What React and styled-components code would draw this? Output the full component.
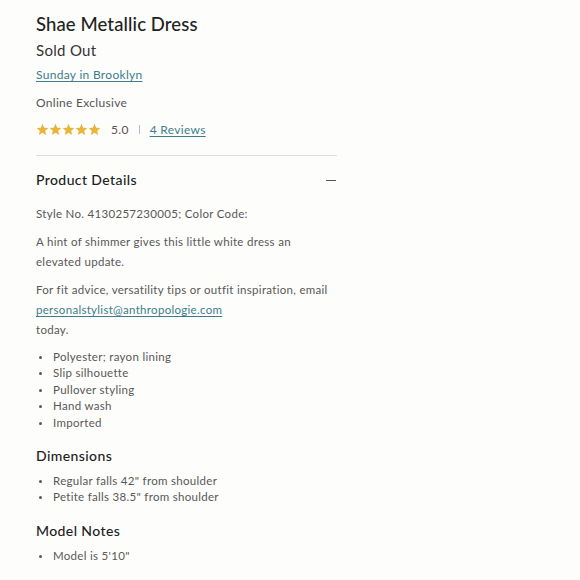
import React from "react";
import styled, { createGlobalStyle } from "styled-components";

const GlobalStyle = createGlobalStyle`
    html, body {
        margin: 0;
        padding: 0;
        background: #fdfdfb;
    }
    body {
        font-family: "Lato", "Open Sans", sans-serif;
        color: #555;
    }
`;

const Page = styled.div`
    width: 301px;
    padding: 11px 0 0 36px;
    display: flex;
    flex-direction: column;
`;

const Title = styled.h1`
    margin: 0;
    font-size: 18.5px;
    font-weight: 500;
    line-height: 26px;
    letter-spacing: 0.1px;
    color: #222;
`;

const Status = styled.div`
    margin-top: 4px;
    font-size: 15px;
    line-height: 18px;
    letter-spacing: 0.3px;
    color: #333;
`;

const Link = styled.a`
    color: #3b7d8c;
    text-decoration: underline;
    text-underline-offset: 2px;
    letter-spacing: 0.3px;
    font-size: ${(p) => p.size || "12px"};
`;

const Brand = styled.div`
    margin-top: 8px;
    font-size: 12px;
    line-height: 16px;
`;

const Note = styled.div`
    margin-top: 12px;
    font-size: 12px;
    line-height: 16px;
    letter-spacing: 0.3px;
    color: #555;
`;

const Rating = styled.div`
    margin-top: 10px;
    display: flex;
    align-items: center;
    height: 16px;
    font-size: 12px;
    letter-spacing: 0.3px;
`;

const Stars = styled.div`
    display: flex;
    margin-right: 10px;
`;

const Score = styled.span`
    color: #555;
`;

const Sep = styled.span`
    width: 1px;
    height: 9px;
    background: #bbb;
    margin: 0 10px;
`;

const Divider = styled.hr`
    margin: 18px 0 0;
    border: none;
    border-top: 1px solid #ddd;
`;

const AccordionHead = styled.div`
    display: flex;
    justify-content: space-between;
    align-items: center;
    margin-top: 14px;
    height: 20px;
`;

const SectionTitle = styled.h2`
    margin: ${(p) => p.$top || "0"} 0 0;
    font-size: 14px;
    font-weight: 500;
    line-height: 20px;
    letter-spacing: 0.4px;
    color: #222;
`;

const Minus = styled.span`
    width: 10px;
    height: 1px;
    background: #555;
    margin-right: 1px;
`;

const Para = styled.p`
    margin: ${(p) => p.$top || "0"} 0 0;
    font-size: 11.5px;
    line-height: 20px;
    letter-spacing: 0.3px;
    color: #585858;
`;

const List = styled.ul`
    margin: ${(p) => p.$top || "0"} 0 0;
    padding: 0;
    list-style: none;
`;

const Item = styled.li`
    position: relative;
    padding-left: 17px;
    font-size: 11.5px;
    line-height: 16.4px;
    letter-spacing: 0.3px;
    color: #585858;

    &::before {
        content: "";
        position: absolute;
        left: 3px;
        top: 7px;
        width: 3px;
        height: 3px;
        border-radius: 50%;
        background: #585858;
    }
`;

const Star = () => (
    <svg width="13" height="13" viewBox="0 0 24 24">
        <path
            d="M12 1.5l3.1 7.1 7.7.7-5.8 5.1 1.7 7.6L12 18.1 5.3 22l1.7-7.6L1.2 9.3l7.7-.7z"
            fill="#e8b43a"
        />
    </svg>
);

const details = ["Polyester; rayon lining", "Slip silhouette", "Pullover styling", "Hand wash", "Imported"];
const dimensions = ['Regular falls 42" from shoulder', 'Petite falls 38.5" from shoulder'];

export default function App() {
    return (
        <>
            <GlobalStyle />
            <Page>
                <Title>Shae Metallic Dress</Title>
                <Status>Sold Out</Status>
                <Brand>
                    <Link href="#">Sunday in Brooklyn</Link>
                </Brand>
                <Note>Online Exclusive</Note>
                <Rating>
                    <Stars>
                        {[0, 1, 2, 3, 4].map((i) => (
                            <Star key={i} />
                        ))}
                    </Stars>
                    <Score>5.0</Score>
                    <Sep />
                    <Link href="#">4 Reviews</Link>
                </Rating>
                <Divider />
                <AccordionHead>
                    <SectionTitle>Product Details</SectionTitle>
                    <Minus />
                </AccordionHead>
                <Para $top="14px">Style No. 4130257230005; Color Code:</Para>
                <Para $top="8px">A hint of shimmer gives this little white dress an elevated update.</Para>
                <Para $top="8px">
                    For fit advice, versatility tips or outfit inspiration, email{" "}
                    <Link href="#" size="11.5px">personalstylist@anthropologie.com</Link>
                    <br />
                    today.
                </Para>
                <List $top="9px">
                    {details.map((d) => (
                        <Item key={d}>{d}</Item>
                    ))}
                </List>
                <SectionTitle $top="15px">Dimensions</SectionTitle>
                <List $top="7px">
                    {dimensions.map((d) => (
                        <Item key={d}>{d}</Item>
                    ))}
                </List>
                <SectionTitle $top="15px">Model Notes</SectionTitle>
                <List $top="7px">
                    <Item>Model is 5'10"</Item>
                </List>
            </Page>
        </>
    );
}
